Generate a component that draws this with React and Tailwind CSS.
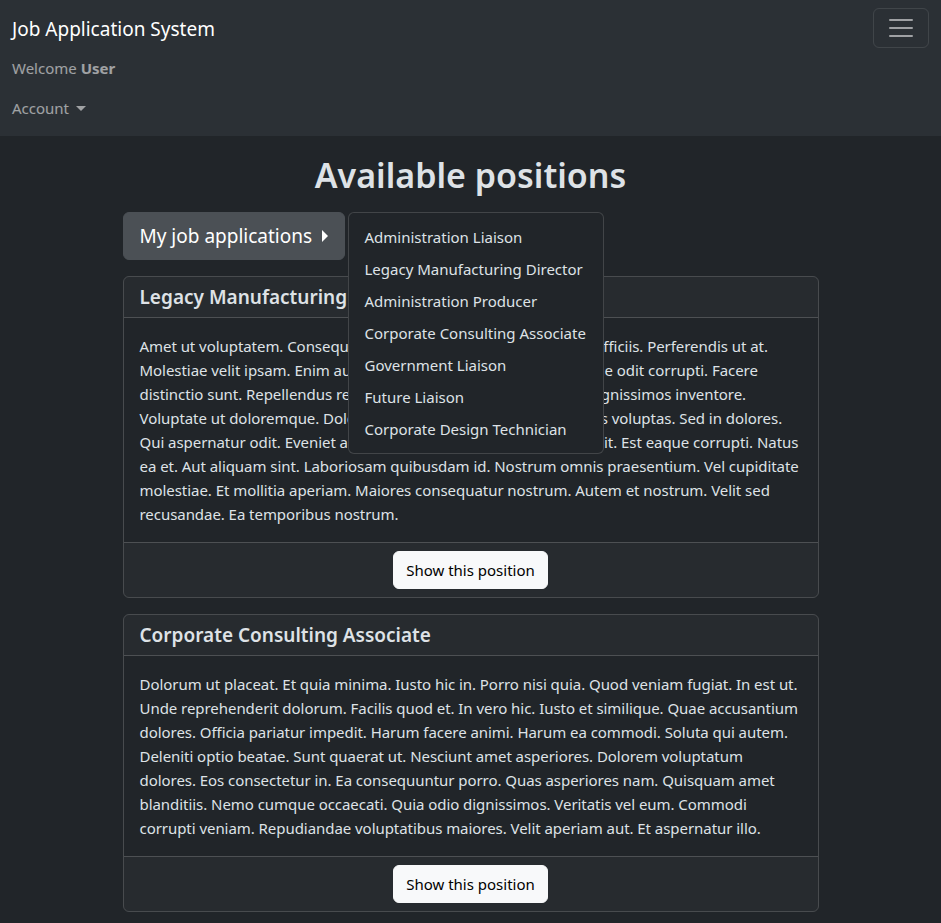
import { useState } from "react";

const positions = [
  "Administration Liaison",
  "Legacy Manufacturing Director",
  "Administration Producer",
  "Corporate Consulting Associate",
  "Government Liaison",
  "Future Liaison",
  "Corporate Design Technician",
];

// lines kept as in the reference so wrapping matches
const cards = [
  {
    title: "Legacy Manufacturing Director",
    lines: [
      "Amet ut voluptatem. Consequatur repudiandae et. Sit quo. Ut ab officiis. Perferendis ut at.",
      "Molestiae velit ipsam. Enim aut magni. Et ut qui. Dolorum molestiae odit corrupti. Facere",
      "distinctio sunt. Repellendus recusandae quia. Quia est ut aut. Et dignissimos inventore.",
      "Voluptate ut doloremque. Dolorem iusto aut. Omnis qui in. Dolores voluptas. Sed in dolores.",
      "Qui aspernatur odit. Eveniet at in. Ut ut tempora sit. Rerum sed velit. Est eaque corrupti. Natus",
      "ea et. Aut aliquam sint. Laboriosam quibusdam id. Nostrum omnis praesentium. Vel cupiditate",
      "molestiae. Et mollitia aperiam. Maiores consequatur nostrum. Autem et nostrum. Velit sed",
      "recusandae. Ea temporibus nostrum.",
    ],
  },
  {
    title: "Corporate Consulting Associate",
    lines: [
      "Dolorum ut placeat. Et quia minima. Iusto hic in. Porro nisi quia. Quod veniam fugiat. In est ut.",
      "Unde reprehenderit dolorum. Facilis quod et. In vero hic. Iusto et similique. Quae accusantium",
      "dolores. Officia pariatur impedit. Harum facere animi. Harum ea commodi. Soluta qui autem.",
      "Deleniti optio beatae. Sunt quaerat ut. Nesciunt amet asperiores. Dolorem voluptatum",
      "dolores. Eos consectetur in. Ea consequuntur porro. Quas asperiores nam. Quisquam amet",
      "blanditiis. Nemo cumque occaecati. Quia odio dignissimos. Veritatis vel eum. Commodi",
      "corrupti veniam. Repudiandae voluptatibus maiores. Velit aperiam aut. Et aspernatur illo.",
    ],
  },
];

function PositionCard({ title, lines }) {
  return (
    <div className="mb-4 rounded-md border border-white/[0.175] overflow-hidden">
      <div className="px-4 py-2 bg-white/[0.03] border-b border-white/[0.175]">
        <h5 className="text-[19px] leading-6 font-semibold text-[#dee2e6]">{title}</h5>
      </div>
      <div className="p-4 text-[15px] leading-6 tracking-[-0.05px] text-[#dee2e6] whitespace-nowrap">
        {lines.map((l, i) => (
          <span key={i}>
            {l}
            {i < lines.length - 1 && <br />}
          </span>
        ))}
      </div>
      <div className="px-4 py-2 bg-white/[0.03] border-t border-white/[0.175] flex justify-center">
        <button className="h-[38px] px-3 rounded-md bg-[#f8f9fa] border border-[#f8f9fa] text-black text-[15px] leading-6">
          Show this position
        </button>
      </div>
    </div>
  );
}

export default function App() {
  const [open] = useState(true);

  return (
    <div className="min-h-screen bg-[#212529] text-[#dee2e6] font-['Noto_Sans',sans-serif]">
      {/* Navbar, collapsed */}
      <nav className="bg-[#2b3035] px-3 py-2">
        <div className="flex items-center justify-between h-10">
          <a className="text-[19px] text-white mt-[2px]">Job Application System</a>
          <button className="w-14 h-10 rounded-md border border-white/10 flex items-center justify-center">
            <svg width="30" height="30" viewBox="0 0 30 30">
              <path
                d="M4 7h22M4 15h22M4 23h22"
                stroke="rgba(255,255,255,0.55)"
                strokeWidth="2"
                strokeLinecap="round"
              />
            </svg>
          </button>
        </div>
        <div className="py-2 text-[15px] leading-6 text-white/55">
          Welcome <b className="font-bold">User</b>
        </div>
        <div className="py-2 text-[15px] leading-6 text-white/55 flex items-center">
          Account
          <span className="ml-[7px] mt-[1px] border-x-[5px] border-x-transparent border-t-[5px] border-t-white/55"></span>
        </div>
      </nav>

      <main className="max-w-[720px] mx-auto px-3 pt-[18px]">
        <h1 className="text-center text-[34px] leading-[43px] font-semibold mb-[15px]">
          Available positions
        </h1>

        <div className="relative flex mb-4">
          <button className="h-[48px] px-4 rounded-md bg-[#4b5055] border border-[#4b5055] text-white text-[19px] flex items-center">
            My job applications
            <span className="ml-[10px] border-y-[6px] border-y-transparent border-l-[6px] border-l-white"></span>
          </button>
          {open && (
            <div className="absolute left-[225px] top-0 z-10 w-[256px] py-2 rounded-md bg-[#212529] border border-white/15">
              {positions.map((p) => (
                <a key={p} className="block px-4 py-1 text-[15px] leading-6 text-[#dee2e6] whitespace-nowrap">
                  {p}
                </a>
              ))}
            </div>
          )}
        </div>

        {cards.map((c) => (
          <PositionCard key={c.title} {...c} />
        ))}
      </main>
    </div>
  );
}
